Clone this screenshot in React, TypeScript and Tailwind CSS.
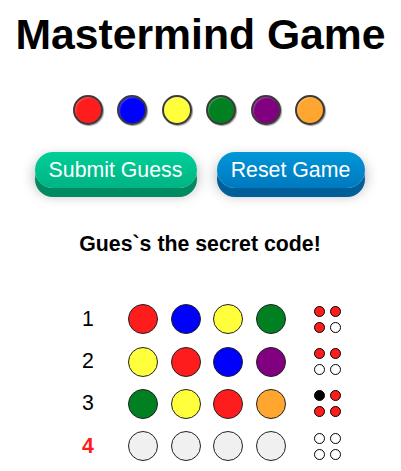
import React from "react";

const C: Record<string, string> = {
  red: "bg-[#ff1c1c]",
  blue: "bg-[#0000ff]",
  yellow: "bg-[#ffff3c]",
  green: "bg-[#008020]",
  purple: "bg-[#800080]",
  orange: "bg-[#ffa630]",
  empty: "bg-[#f0f0f0]",
};

const palette = ["red", "blue", "yellow", "green", "purple", "orange"];

const rows: { n: number; guess: string[]; pegs: string[]; current?: boolean }[] = [
  { n: 1, guess: ["red", "blue", "yellow", "green"], pegs: ["r", "r", "r", "w"] },
  { n: 2, guess: ["yellow", "red", "blue", "purple"], pegs: ["r", "r", "w", "w"] },
  { n: 3, guess: ["green", "yellow", "red", "orange"], pegs: ["b", "r", "r", "r"] },
  { n: 4, guess: ["empty", "empty", "empty", "empty"], pegs: ["w", "w", "w", "w"], current: true },
];

const pegCls: Record<string, string> = {
  r: "bg-[#ff1c1c]",
  w: "bg-white",
  b: "bg-black",
};

export default function App() {
  return (
    <div className="w-[401px] h-[471px] bg-white overflow-hidden text-black" style={{ fontFamily: '"Liberation Sans", Arial, sans-serif' }}>
      <h1 className="mt-[10px] text-center text-[42.7px] leading-[49px] font-bold">Mastermind Game</h1>

      <div className="mt-[36px] flex justify-center gap-[14.4px] pr-[3px]">
        {palette.map((c) => (
          <div
            key={c}
            className={`w-[30px] h-[30px] rounded-full border-2 border-[#3a3a3a] shadow-[inset_1px_1px_1px_rgba(255,255,255,0.25),1px_1px_1px_rgba(0,0,0,0.4)] ${C[c]}`}
          />
        ))}
      </div>

      <div className="mt-[27px] flex justify-center gap-[20px] pr-[2px]">
        <button className="w-[162px] h-[36px] rounded-full bg-gradient-to-b from-[#00cf98] to-[#00b384] text-white text-[21.3px] leading-[36px] shadow-[0_9px_0_#008a60,0_6px_14px_rgba(0,0,0,0.35)]">
          Submit Guess
        </button>
        <button className="w-[148px] h-[36px] rounded-full bg-gradient-to-b from-[#0097d8] to-[#0079bf] text-white text-[21.3px] leading-[36px] shadow-[0_9px_0_#005e98,0_6px_14px_rgba(0,0,0,0.35)]">
          Reset Game
        </button>
      </div>

      <p className="mt-[44px] text-center text-[21.3px] leading-[25px] font-bold pr-[1px]">Gues`s the secret code!</p>

      <div className="mt-[41px] flex flex-col">
        {rows.map((r) => (
          <div key={r.n} className="h-[42.4px] flex items-center pl-[78px]">
            <div
              className={`w-[20px] text-center text-[21.3px] leading-[25px] ${r.current ? "text-[#ff1c1c] font-bold" : "text-black"}`}
            >
              {r.n}
            </div>
            <div className="ml-[30px] flex gap-[12.7px]">
              {r.guess.map((g, i) => (
                <div key={i} className={`w-[30px] h-[30px] rounded-full border border-[#222] ${C[g]}`} />
              ))}
            </div>
            <div className="ml-[28px] grid grid-cols-2 gap-[5px]">
              {r.pegs.map((p, i) => (
                <div key={i} className={`w-[11px] h-[11px] rounded-full border border-black ${pegCls[p]}`} />
              ))}
            </div>
          </div>
        ))}
      </div>
    </div>
  );
}
